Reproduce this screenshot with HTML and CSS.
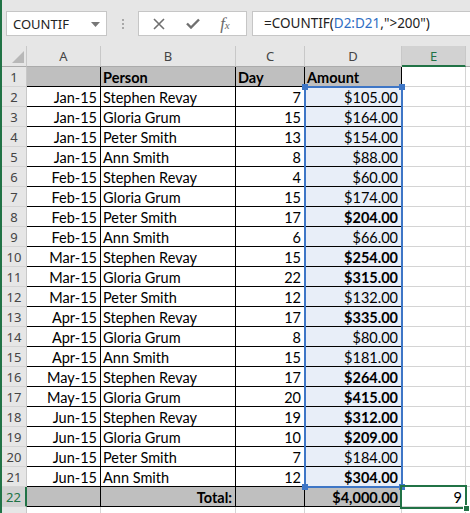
FILE: index.html
```html
<!DOCTYPE html>
<html>
<head>
<meta charset="utf-8">
<link rel="stylesheet" href="styles.css">
</head>
<body>
<div class="app">
  <div class="bar">
    <div class="namebox"><span>COUNTIF</span><svg class="dd" width="9" height="5" viewBox="0 0 9 5"><path d="M0 0H9L4.5 5Z" fill="#777"/></svg></div>
    <div class="grip"><i></i><i></i><i></i></div>
    <div class="btns">
      <svg width="12" height="12" viewBox="0 0 12 12"><path d="M1 1L11 11M11 1L1 11" stroke="#6f6f6f" stroke-width="1.6" fill="none"/></svg>
      <svg width="14" height="11" viewBox="0 0 14 11"><path d="M1 5.5L5 9.5L13 1.5" stroke="#6f6f6f" stroke-width="2.4" fill="none"/></svg>
      <span class="fx">f<sub>x</sub></span>
    </div>
    <div class="formula">=COUNTIF(<span class="ref">D2:D21</span>,"&gt;200")</div>
  </div>
  <div class="sheet">
    <div class="cells">
    <div class="ch corner"><svg width="12" height="12" viewBox="0 0 12 12"><path d="M12 0V12H0Z" fill="#b8b8b8"/></svg></div>
    <div class="ch">A</div><div class="ch">B</div><div class="ch">C</div><div class="ch">D</div><div class="ch act">E</div><div class="ch"></div>

    <div class="rh">1</div><div class="k g"></div><div class="k g bd">Person</div><div class="k g bd">Day</div><div class="k g bd">Amount</div><div class="c"></div><div class="c"></div>
    <div class="rh">2</div><div class="k r">Jan-15</div><div class="k">Stephen Revay</div><div class="k r">7</div><div class="k r s">$105.00</div><div class="c"></div><div class="c"></div>
    <div class="rh">3</div><div class="k r">Jan-15</div><div class="k">Gloria Grum</div><div class="k r">15</div><div class="k r s">$164.00</div><div class="c"></div><div class="c"></div>
    <div class="rh">4</div><div class="k r">Jan-15</div><div class="k">Peter Smith</div><div class="k r">13</div><div class="k r s">$154.00</div><div class="c"></div><div class="c"></div>
    <div class="rh">5</div><div class="k r">Jan-15</div><div class="k">Ann Smith</div><div class="k r">8</div><div class="k r s">$88.00</div><div class="c"></div><div class="c"></div>
    <div class="rh">6</div><div class="k r">Feb-15</div><div class="k">Stephen Revay</div><div class="k r">4</div><div class="k r s">$60.00</div><div class="c"></div><div class="c"></div>
    <div class="rh">7</div><div class="k r">Feb-15</div><div class="k">Gloria Grum</div><div class="k r">15</div><div class="k r s">$174.00</div><div class="c"></div><div class="c"></div>
    <div class="rh">8</div><div class="k r">Feb-15</div><div class="k">Peter Smith</div><div class="k r">17</div><div class="k r s bd">$204.00</div><div class="c"></div><div class="c"></div>
    <div class="rh">9</div><div class="k r">Feb-15</div><div class="k">Ann Smith</div><div class="k r">6</div><div class="k r s">$66.00</div><div class="c"></div><div class="c"></div>
    <div class="rh">10</div><div class="k r">Mar-15</div><div class="k">Stephen Revay</div><div class="k r">15</div><div class="k r s bd">$254.00</div><div class="c"></div><div class="c"></div>
    <div class="rh">11</div><div class="k r">Mar-15</div><div class="k">Gloria Grum</div><div class="k r">22</div><div class="k r s bd">$315.00</div><div class="c"></div><div class="c"></div>
    <div class="rh">12</div><div class="k r">Mar-15</div><div class="k">Peter Smith</div><div class="k r">12</div><div class="k r s">$132.00</div><div class="c"></div><div class="c"></div>
    <div class="rh">13</div><div class="k r">Apr-15</div><div class="k">Stephen Revay</div><div class="k r">17</div><div class="k r s bd">$335.00</div><div class="c"></div><div class="c"></div>
    <div class="rh">14</div><div class="k r">Apr-15</div><div class="k">Gloria Grum</div><div class="k r">8</div><div class="k r s">$80.00</div><div class="c"></div><div class="c"></div>
    <div class="rh">15</div><div class="k r">Apr-15</div><div class="k">Ann Smith</div><div class="k r">15</div><div class="k r s">$181.00</div><div class="c"></div><div class="c"></div>
    <div class="rh">16</div><div class="k r">May-15</div><div class="k">Stephen Revay</div><div class="k r">17</div><div class="k r s bd">$264.00</div><div class="c"></div><div class="c"></div>
    <div class="rh">17</div><div class="k r">May-15</div><div class="k">Gloria Grum</div><div class="k r">20</div><div class="k r s bd">$415.00</div><div class="c"></div><div class="c"></div>
    <div class="rh">18</div><div class="k r">Jun-15</div><div class="k">Stephen Revay</div><div class="k r">19</div><div class="k r s bd">$312.00</div><div class="c"></div><div class="c"></div>
    <div class="rh">19</div><div class="k r">Jun-15</div><div class="k">Gloria Grum</div><div class="k r">10</div><div class="k r s bd">$209.00</div><div class="c"></div><div class="c"></div>
    <div class="rh">20</div><div class="k r">Jun-15</div><div class="k">Peter Smith</div><div class="k r">7</div><div class="k r s">$184.00</div><div class="c"></div><div class="c"></div>
    <div class="rh">21</div><div class="k r">Jun-15</div><div class="k">Ann Smith</div><div class="k r">12</div><div class="k r s bd">$304.00</div><div class="c"></div><div class="c"></div>
    <div class="rh act">22</div><div class="k g"></div><div class="k g r bd">Total:</div><div class="k g"></div><div class="k g r bd">$4,000.00</div><div class="c r">9</div><div class="c"></div>
    <div class="rh"></div><div class="c"></div><div class="c"></div><div class="c"></div><div class="c"></div><div class="c"></div><div class="c"></div>
    </div>
    <div class="over">
      <div class="range"><i class="h tl"></i><i class="h tr"></i><i class="h bl"></i><i class="h br"></i></div>
      <div class="active"><i class="fill"></i></div>
    </div>
  </div>
</div>
</body>
</html>
```

FILE: styles.css
```css
* { box-sizing: border-box; }
html, body { margin: 0; padding: 0; }
body { background: #fff; overflow: hidden; }
.app {
  width: 470px;
  height: 513px;
  border-left: 2px solid #217346;
  display: flex;
  flex-direction: column;
  overflow: hidden;
}
.bar {
  height: 46px;
  flex: none;
  background: #e6e6e6;
  display: flex;
  align-items: flex-start;
  padding: 11px 0 0 4px;
  font-family: "Noto Sans", "Open Sans", sans-serif;
  font-size: 13px;
  color: #222;
}
.namebox {
  width: 101px;
  height: 25px;
  background: #fff;
  border: 1px solid #c6c6c6;
  display: flex;
  align-items: center;
  justify-content: space-between;
  padding: 0 6px 0 6px;
  color: #222;
}
.dd { margin-top: 1px; }
.grip {
  width: 31px;
  height: 25px;
  display: flex;
  flex-direction: column;
  align-items: center;
  justify-content: center;
  gap: 2px;
}
.grip i { width: 2px; height: 2px; background: #a8a8a8; display: block; }
.btns {
  width: 109px;
  height: 25px;
  background: #fff;
  border: 1px solid #c6c6c6;
  display: flex;
  align-items: center;
  justify-content: space-around;
  padding: 0 6px 0 4px;
}
.fx {
  font-family: "Liberation Serif", serif;
  font-style: italic;
  font-size: 17px;
  color: #6a6a6a;
  line-height: 1;
}
.fx sub { font-size: 11px; vertical-align: 0; }
.formula {
  flex: 1;
  height: 25px;
  margin-left: 5px;
  background: #fff;
  border: 1px solid #c6c6c6;
  border-right: none;
  padding: 0 0 0 11px;
  line-height: 23px;
  white-space: nowrap;
  font-size: 13.5px;
}
.ref { color: #2f6ec4; }

.sheet {
  flex: 1;
  display: grid;
  grid-template-columns: 1fr;
  grid-template-rows: 1fr;
  background: #fff;
}
.cells, .over {
  grid-area: 1 / 1;
  display: grid;
  grid-template-columns: 25px 74px 135px 69px 97px 64px 10px;
  grid-template-rows: 21px repeat(23, 20px);
}
.over { pointer-events: none; }
.cells {
  font-family: Lato, "Liberation Sans", sans-serif;
  font-size: 14.5px;
  color: #000;
}
.ch {
  background: #e6e6e6;
  border-right: 1px solid #c8c8c8;
  border-bottom: 1px solid #ababab;
  font-family: "Noto Sans", "Open Sans", sans-serif;
  font-size: 13px;
  color: #444;
  text-align: center;
  line-height: 21px;
}
.ch.corner {
  display: flex;
  align-items: flex-end;
  justify-content: flex-end;
  padding: 0 2px 3px 0;
}
.ch.act {
  background: #d2d2d2;
  color: #217346;
  border-bottom: 2px solid #217346;
}
.rh {
  background: #e6e6e6;
  border-right: 1px solid #c8c8c8;
  border-bottom: 1px solid #d4d4d4;
  font-family: "Noto Sans", "Open Sans", sans-serif;
  font-size: 13px;
  color: #444;
  text-align: center;
  line-height: 20px;
}
.rh.act {
  background: #d2d2d2;
  color: #217346;
  border-right: 2px solid #217346;
}
.c, .k {
  border-right: 1px solid #d4d4d4;
  border-bottom: 1px solid #d4d4d4;
  padding: 1px 3px 0 2px;
  line-height: 19px;
  white-space: nowrap;
  overflow: hidden;
}
.k { border-right-color: #000; border-bottom-color: #000; }
.g { background: #bfbfbf; }
.r { text-align: right; }
.bd { font-weight: bold; }
.s { background: #e8eef8; }

.range {
  grid-column: 5;
  grid-row: 3 / 23;
  margin: -1px -1px -1px -1px;
  border: 2px solid #3e76c6;
  position: relative;
}
.h {
  position: absolute;
  width: 6px;
  height: 6px;
  background: #3e76c6;
}
.tl { left: -4px; top: -4px; }
.tr { right: -4px; top: -4px; }
.bl { left: -4px; bottom: -4px; }
.br { right: -4px; bottom: -4px; }

.active {
  grid-column: 6;
  grid-row: 23;
  margin: -2px -1px -2px -2px;
  border: 2px solid #217346;
  position: relative;
}
.fill {
  position: absolute;
  right: -5px;
  bottom: -5px;
  width: 7px;
  height: 7px;
  background: #217346;
  border: 1px solid #fff;
}
```
